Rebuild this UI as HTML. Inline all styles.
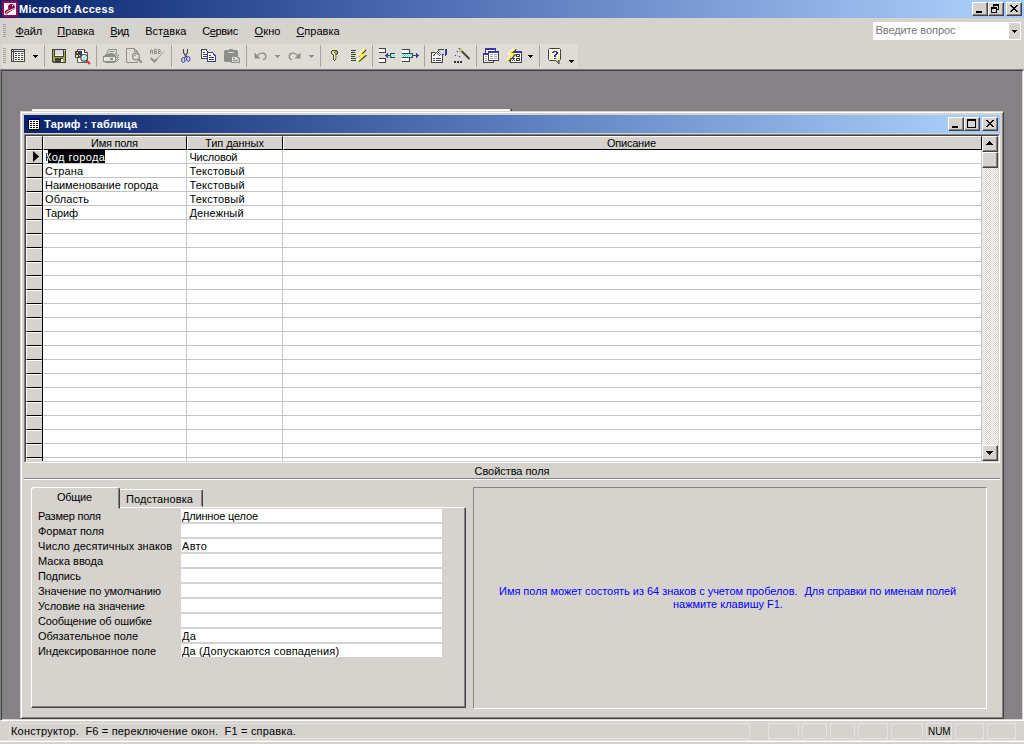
<!DOCTYPE html><html><head><meta charset="utf-8"><title>Microsoft Access</title>
<style>
*{box-sizing:border-box;margin:0;padding:0}
html,body{width:1024px;height:744px;overflow:hidden;background:#d6d3ce}
body{font-family:"Liberation Sans",sans-serif;font-size:11px;color:#000;position:relative}
.a{position:absolute}
.t{position:absolute;white-space:nowrap;line-height:13px;height:13px;transform-origin:0 50%}
u{text-decoration:underline;text-underline-offset:1px;text-decoration-thickness:1px}
svg{position:absolute;overflow:visible}
.btn{position:absolute;background:#d6d3ce;border:1px solid;border-color:#fff #424142 #424142 #fff;box-shadow:inset -1px -1px 0 #848284,inset 1px 1px 0 #d6d3ce}
.sep{position:absolute;width:1px;top:45px;height:22px;background:#a6a39c}
.sel{position:absolute;left:26px;width:16px;height:14px;background:#d6d3ce;border-top:1px solid #fff;border-left:1px solid #fff;border-bottom:1px solid #000}
.hl{position:absolute;height:1px;left:43px;width:938px;background:#c6c3c6}
.pv{position:absolute;left:181px;width:261px;height:13px;background:#fff}
.sp{position:absolute;top:723px;height:16px;border:1px solid #e6e2e0}
</style></head><body>
<div class="a" style="left:0;top:0;width:1024px;height:18px;background:linear-gradient(90deg,#08246b 0,#5678ba 47.3%,#a5cbf7 94.6%)"></div>
<div class="t" style="left: 19px; top: 3px; color: rgb(255, 255, 255); font-weight: bold; letter-spacing: 0.29px;">Microsoft Access</div>
<div class="btn" style="left:972px;top:2px;width:16px;height:14px"></div>
<div class="btn" style="left:988px;top:2px;width:16px;height:14px"></div>
<div class="btn" style="left:1006px;top:2px;width:16px;height:14px"></div>
<div class="a" style="left:976px;top:11px;width:6px;height:2px;background:#000"></div>
<svg style="left:988px;top:2px" width="16" height="14" shape-rendering="crispEdges"><path d="M5 2h6v2h-6zM5 4h1v2h-1zM10 4h1v4h-1zM9 7h1v1h-1zM3 5h6v2h-6zM3 7h1v4h-1zM8 7h1v4h-1zM3 10h6v1h-6z" fill="#000"></path></svg>
<svg style="left:1010px;top:5px" width="8" height="7" shape-rendering="crispEdges"><path d="M0 0h2v1h-2zM6 0h2v1h-2zM1 1h2v1h-2zM5 1h2v1h-2zM2 2h4v1h-4zM3 3h2v1h-2zM2 4h4v1h-4zM1 5h2v1h-2zM5 5h2v1h-2zM0 6h2v1h-2zM6 6h2v1h-2z"></path></svg>
<div class="t" style="left: 15.4px; top: 25px; letter-spacing: -0.09px;"><u>Ф</u>айл</div>
<div class="t" style="left: 57.3px; top: 25px; letter-spacing: -0.03px;"><u>П</u>равка</div>
<div class="t" style="left: 110.3px; top: 25px; letter-spacing: -0.46px;"><u>В</u>ид</div>
<div class="t" style="left: 145.2px; top: 25px; letter-spacing: 0.05px;">Вст<u>а</u>вка</div>
<div class="t" style="left: 202.2px; top: 25px; letter-spacing: -0.34px;">С<u>е</u>рвис</div>
<div class="t" style="left: 254.5px; top: 25px; letter-spacing: 0.14px;"><u>О</u>кно</div>
<div class="t" style="left:296.4px;top:25px"><u>С</u>правка</div>
<div class="a" style="left:3px;top:24px;width:3px;height:1px;background:#a0a0a0"></div>
<div class="a" style="left:3px;top:26px;width:3px;height:1px;background:#a0a0a0"></div>
<div class="a" style="left:3px;top:28px;width:3px;height:1px;background:#a0a0a0"></div>
<div class="a" style="left:3px;top:30px;width:3px;height:1px;background:#a0a0a0"></div>
<div class="a" style="left:3px;top:32px;width:3px;height:1px;background:#a0a0a0"></div>
<div class="a" style="left:3px;top:34px;width:3px;height:1px;background:#a0a0a0"></div>
<div class="a" style="left:3px;top:36px;width:3px;height:1px;background:#a0a0a0"></div>
<div class="a" style="left:873px;top:22px;width:148px;height:18px;background:#fff"></div>
<div class="a" style="left:1009px;top:23px;width:11px;height:16px;background:#d6d3ce"></div>
<svg style="left:1012px;top:30px" width="5" height="3" shape-rendering="crispEdges"><path d="M0 0h5v1h-5zM1 1h3v1h-3zM2 2h1v1h-1z"></path></svg>
<div class="t" style="left: 875.5px; top: 24px; color: rgb(119, 119, 119); letter-spacing: -0.09px;">Введите вопрос</div>
<div class="a" style="left:1px;top:44px;width:577px;height:24px;background:#dfdcd5;border-radius:3px 2px 2px 3px"></div>
<div class="a" style="left:3px;top:48px;width:3px;height:1px;background:#a0a0a0"></div>
<div class="a" style="left:3px;top:50px;width:3px;height:1px;background:#a0a0a0"></div>
<div class="a" style="left:3px;top:52px;width:3px;height:1px;background:#a0a0a0"></div>
<div class="a" style="left:3px;top:54px;width:3px;height:1px;background:#a0a0a0"></div>
<div class="a" style="left:3px;top:56px;width:3px;height:1px;background:#a0a0a0"></div>
<div class="a" style="left:3px;top:58px;width:3px;height:1px;background:#a0a0a0"></div>
<div class="a" style="left:3px;top:60px;width:3px;height:1px;background:#a0a0a0"></div>
<div class="a" style="left:3px;top:62px;width:3px;height:1px;background:#a0a0a0"></div>
<div class="sep" style="left:44px"></div>
<div class="sep" style="left:96px"></div>
<div class="sep" style="left:171px"></div>
<div class="sep" style="left:246px"></div>
<div class="sep" style="left:320px"></div>
<div class="sep" style="left:372px"></div>
<div class="sep" style="left:424px"></div>
<div class="sep" style="left:476px"></div>
<div class="sep" style="left:539px"></div>
<svg style="left:2px;top:1px" width="16" height="16" viewBox="0 0 16 16" shape-rendering="crispEdges"><defs><pattern id="ck" width="2" height="2" patternUnits="userSpaceOnUse"><rect width="2" height="2" fill="#a00000"></rect><rect width="1" height="1" fill="#a000a0"></rect><rect x="1" y="1" width="1" height="1" fill="#a000a0"></rect></pattern></defs><rect width="16" height="16" fill="url(#ck)"></rect><rect x="2" y="2" width="12" height="12" fill="#fff"></rect><g shape-rendering="auto"><ellipse cx="9.5" cy="6.1" rx="3.4" ry="3.2" fill="#8a0040"></ellipse><path d="M4.4 11.2L9 8.2" stroke="#8a0040" stroke-width="3.3" stroke-linecap="round" fill="none"></path><path d="M4.3 11.4L7 9.8L11.6 7.7" stroke="#fff" stroke-width="0.9" stroke-linecap="round" fill="none"></path><rect x="10" y="4" width="1.2" height="1.2" fill="#fff"></rect></g></svg>
<svg style="left:11px;top:49px" width="14" height="13" viewBox="0 0 14 13" shape-rendering="crispEdges"><path fill="#484846" d="M0 0h14v13h-14z"></path><path fill="#fff" d="M1 3h12v9h-12z"></path><path fill="#d6d6d6" d="M3 1h10v1h-10zM1 3h1v9h-1z"></path><path fill="#fff" d="M1 1h1v1h-1z"></path><path fill="#484846" d="M2 1h1v11h-1zM1 2h12v1h-12z"></path><path fill="#3c3c3c" d="M4 4h2v1h-2zM7 4h2v1h-2zM10 4h2v1h-2zM4 6h2v1h-2zM7 6h2v1h-2zM10 6h2v1h-2zM4 8h2v1h-2zM7 8h2v1h-2zM10 8h2v1h-2zM4 10h2v1h-2zM7 10h2v1h-2zM10 10h2v1h-2z"></path></svg>
<svg style="left:33px;top:55px" width="5" height="3" viewBox="0 0 5 3" shape-rendering="crispEdges"><path fill="#000" d="M0 0h5v1h-5zM1 1h3v1h-3zM2 2h1v1h-1z"></path></svg>
<svg style="left:52px;top:49px" width="14" height="14" viewBox="0 0 14 14" shape-rendering="crispEdges"><path fill="#404040" d="M0 0h14v13h-14zM1 13h13v1h-13z"></path><path fill="#a6a63c" d="M1 1h12v11h-12zM2 12h11v1h-11z"></path><path fill="#404040" d="M2 1h10v7h-10zM3 9h8v4h-8z"></path><path fill="#dcdce0" d="M3 1h8v6h-8z"></path><path fill="#fff" d="M3 6h8v1h-8zM12 1h1v1h-1zM9 10h2v3h-2z"></path></svg>
<svg style="left:75px;top:49px" width="16" height="16" viewBox="0 0 16 16" shape-rendering="crispEdges"><g shape-rendering="auto"><path d="M2.5 0.5h7l3 3v10h-10z" fill="#fff" stroke="#5a5a58" stroke-width="1"></path><path d="M9.5 0.5v3h3" fill="#fff" stroke="#404040" stroke-width="1"></path></g><path fill="#404040" d="M0 2h7v7h-7z"></path><path fill="#e02020" d="M1 3h2v2h-2z"></path><path fill="#2030d0" d="M4 3h2v2h-2z"></path><path fill="#e8e820" d="M1 6h2v2h-2z"></path><path fill="#208020" d="M4 6h2v2h-2z"></path><path fill="#fff" d="M2 3h1v1h-1zM1 7h1v1h-1z"></path><path fill="#c0e0c0" d="M4 6h1v1h-1z"></path><g shape-rendering="auto"><path d="M11.5 11.5L14.4 14.4" stroke="#e83838" stroke-width="2.2" stroke-linecap="round"></path><circle cx="9.2" cy="8.8" r="3.3" fill="#fff" stroke="#484848" stroke-width="1.2"></circle><path d="M7.6 10.6l3.2-3.2M8.8 11l2.4-2.4M7.2 9.4l2-2" stroke="#40e8e8" stroke-width="0.9"></path></g></svg>
<svg style="left:103px;top:49px" width="16" height="14" viewBox="0 0 16 14" shape-rendering="crispEdges"><g shape-rendering="auto" fill="none" stroke="#8c8e8a" stroke-width="1"><path d="M5.5 0.5H13.5V2.5L12.5 5"></path><path d="M5.5 0.5L3.5 5.5"></path><path d="M6.5 2.5H11M5.5 4.5H10"></path><path d="M2.5 5.5H12.5M1.5 6.5H12.5"></path><rect x="0.5" y="7.5" width="12" height="5"></rect><path d="M2 13.5H12"></path></g><path fill="#eceae4" d="M1 9h6v2h-6zM10 9h2v2h-2z"></path><path fill="#8c8e8a" d="M7 9h3v2h-3z"></path><path fill="#8c8e8a" d="M13 4h1v1h-1zM14 5h1v1h-1zM15 6h1v1h-1zM13 6h1v1h-1zM14 7h1v1h-1zM15 8h1v1h-1zM13 8h1v1h-1zM14 9h1v1h-1zM15 10h1v1h-1zM13 10h1v1h-1zM14 11h1v1h-1zM13 12h1v1h-1z"></path></svg>
<svg style="left:126px;top:48px" width="16" height="15" viewBox="0 0 16 15" shape-rendering="crispEdges"><g shape-rendering="auto" fill="none" stroke="#8c8e8a"><path d="M0.5 0.5h8l3 3v3M0.5 0.5v14h11v-1.5"></path><path d="M8.5 0.5v3h3"></path><circle cx="10" cy="8.5" r="3.4" stroke-width="1.2"></circle><path d="M12.6 11.2L15.2 14" stroke-width="2" stroke-linecap="round"></path><path d="M8.3 8.3a2 2 0 0 1 1.6-1.6"></path></g></svg>
<svg style="left:150px;top:49px" width="15" height="14" viewBox="0 0 15 14" shape-rendering="crispEdges"><path fill="#8c8e8a" d="M0 1h1v4h-1zM1 0h1v1h-1zM2 1h1v4h-1zM1 2h1v1h-1zM4 0h3v1h-3zM4 1h1v4h-1zM5 2h2v1h-2zM6 3h1v1h-1zM5 4h2v1h-2zM8 0h2v1h-2zM8 1h1v4h-1zM10 1h1v1h-1zM9 2h1v1h-1zM10 3h1v1h-1zM9 4h1v1h-1z"></path><g shape-rendering="auto"><path d="M0.8 9l3.6 3.6L7 10" stroke="#8c8e8a" stroke-width="2" fill="none"></path><path d="M6 11L14 2.3" stroke="#8c8e8a" stroke-width="0.9" fill="none"></path></g></svg>
<svg style="left:181px;top:49px" width="10" height="14" viewBox="0 0 10 14" shape-rendering="crispEdges"><g shape-rendering="auto" fill="none"><path d="M2.5 0v3.5L4.5 6.8M6.5 0v3.5L4.5 6.8M4.5 5.5v2.5" stroke="#404040" stroke-width="1.1"></path><ellipse cx="2.3" cy="11" rx="1.7" ry="2.4" stroke="#3838a8" stroke-width="1"></ellipse><ellipse cx="7.3" cy="10" rx="1.7" ry="2.4" stroke="#3838a8" stroke-width="1"></ellipse><path d="M4.5 7.5L3.6 9M4.8 7.2L6 8" stroke="#3838a8" stroke-width="1.1"></path></g></svg>
<svg style="left:201px;top:49px" width="15" height="13" viewBox="0 0 15 13" shape-rendering="crispEdges"><path fill="#404040" d="M0 0h6v1h-6zM0 0h1v10h-1zM0 9h7v1h-7zM5 1h1v1h-1zM6 2h1v1h-1zM7 3h1v1h-1z"></path><path fill="#fff" d="M1 1h4v8h-4zM5 2h1v7h-1zM6 3h1v6h-1z"></path><path fill="#404040" d="M2 3h2v1h-2zM2 5h4v1h-4zM2 7h4v1h-4z"></path><path fill="#3838a8" d="M6 3h6v10h-6zM12 4h1v9h-1zM13 5h1v8h-1zM14 6h1v7h-1z"></path><path fill="#fff" d="M7 4h4v8h-4zM11 5h1v7h-1zM12 6h1v6h-1zM13 7h1v5h-1z"></path><path fill="#fff" d="M11 4h1v1h-1z"></path><path fill="#404040" d="M8 6h2v1h-2zM8 8h5v1h-5zM8 10h5v1h-5z"></path></svg>
<svg style="left:224px;top:49px" width="16" height="14" viewBox="0 0 16 14" shape-rendering="crispEdges"><g shape-rendering="auto"><rect x="0" y="1" width="14" height="12" rx="1.5" fill="#8c8e8a"></rect></g><path fill="#8c8e8a" d="M5 0h4v1h-4z"></path><path fill="#dedcd6" d="M4 3h6v1h-6z"></path><path fill="#8c8e8a" d="M7 7h7v7h-7zM14 8h1v6h-1zM15 9h1v5h-1z"></path><path fill="#dedcd6" d="M8 8h5v5h-5zM13 9h1v4h-1zM14 10h1v3h-1z"></path><path fill="#8c8e8a" d="M9 9h2v1h-2zM9 11h5v1h-5z"></path></svg>
<svg style="left:254px;top:52px" width="13" height="8" viewBox="0 0 13 8" shape-rendering="crispEdges"><g shape-rendering="auto"><path d="M0.5 0.5v6h6z" fill="#8c8e8a"></path><path d="M3.5 3.5C6 0.2 11.5 0.5 11.8 4.2C12 6.5 10.5 7.5 9 7.5" stroke="#8c8e8a" stroke-width="1.3" fill="none"></path></g></svg>
<svg style="left:275px;top:55px" width="5" height="3" viewBox="0 0 5 3" shape-rendering="crispEdges"><path fill="#8c8e8a" d="M0 0h5v1h-5zM1 1h3v1h-3zM2 2h1v1h-1z"></path></svg>
<svg style="left:288px;top:52px" width="13" height="8" viewBox="0 0 13 8" shape-rendering="crispEdges"><g shape-rendering="auto"><path d="M12.5 0.5v6h-6z" fill="#8c8e8a"></path><path d="M9.5 3.5C7 0.2 1.5 0.5 1.2 4.2C1 6.5 2.5 7.5 4 7.5" stroke="#8c8e8a" stroke-width="1.3" fill="none"></path></g></svg>
<svg style="left:309px;top:55px" width="5" height="3" viewBox="0 0 5 3" shape-rendering="crispEdges"><path fill="#8c8e8a" d="M0 0h5v1h-5zM1 1h3v1h-3zM2 2h1v1h-1z"></path></svg>
<svg style="left:331px;top:50px" width="8" height="12" viewBox="0 0 8 12" shape-rendering="crispEdges"><path fill="#404040" d="M1 0h5v1h-5zM0 1h1v3h-1zM6 1h1v3h-1zM1 4h1v1h-1zM5 4h1v1h-1zM2 5h1v5h-1zM3 10h1v1h-1zM4 9h1v1h-1z"></path><path fill="#e6e632" d="M1 1h3v2h-3zM1 3h1v1h-1z"></path><path fill="#a0a030" d="M4 1h2v3h-2zM3 3h2v2h-2zM4 5h1v4h-1z"></path><path fill="#fff" d="M2 2h2v2h-2zM3 4h1v5h-1z"></path><path fill="#a0a030" d="M5 6h1v1h-1zM5 8h1v1h-1z"></path><path fill="#404040" d="M3 2h1v1h-1z"></path></svg>
<svg style="left:351px;top:48px" width="16" height="14" viewBox="0 0 16 14" shape-rendering="crispEdges"><path fill="#404040" d="M0 2h5v1h-5zM0 4h4v1h-4zM0 6h5v1h-5zM0 8h4v1h-4zM0 10h5v1h-5zM0 12h5v1h-5z"></path><g shape-rendering="auto"><path d="M15.2 1.6L9.4 7.9H14.6L7.8 13.6" stroke="#404040" stroke-width="1.3" fill="none"></path><path d="M13 0.4L6.4 6.7H11.8L5.8 12.4" stroke="#fff" stroke-width="1.3" fill="none"></path><path d="M14 1L7.8 7.2H13.2L6.8 13" stroke="#ffff10" stroke-width="1.2" fill="none"></path></g></svg>
<svg style="left:379px;top:48px" width="16" height="15" viewBox="0 0 16 15" shape-rendering="crispEdges"><defs><pattern id="cy" width="2" height="2" patternUnits="userSpaceOnUse"><rect width="2" height="2" fill="#fff"></rect><rect width="1" height="1" fill="#20f0f0"></rect><rect x="1" y="1" width="1" height="1" fill="#20f0f0"></rect></pattern></defs><path fill="#404040" d="M0 0h7v1h-7zM6 0h1v5h-1zM0 4h7v1h-7zM0 10h7v1h-7zM6 10h1v5h-1zM0 14h7v1h-7z"></path><path fill="#fff" d="M0 1h6v3h-6zM0 11h6v3h-6z"></path><path fill="#404040" d="M11 5h5v1h-5zM11 5h1v5h-1zM11 9h5v1h-5z"></path><rect x="12" y="6" width="4" height="3" fill="url(#cy)"></rect><path fill="#3838a8" d="M6 7h5v1h-5zM7 6h1v3h-1zM8 5h1v5h-1z"></path></svg>
<svg style="left:402px;top:49px" width="17" height="13" viewBox="0 0 17 13" shape-rendering="crispEdges"><path fill="#404040" d="M0 0h8v1h-8zM7 0h1v4h-1zM0 12h8v1h-8zM7 8h1v5h-1z"></path><path fill="#fff" d="M0 1h7v3h-7zM0 9h7v3h-7z"></path><path fill="#404040" d="M0 4h11v1h-11zM10 4h1v5h-1zM0 8h11v1h-11z"></path><rect x="0" y="5" width="10" height="3" fill="url(#cy)"></rect><path fill="#3838a8" d="M11 6h6v1h-6zM15 5h1v3h-1zM14 4h1v5h-1z"></path></svg>
<svg style="left:431px;top:49px" width="16" height="14" viewBox="0 0 16 14" shape-rendering="crispEdges"><path fill="#404040" d="M0 3h12v11h-12z"></path><path fill="#fff" d="M1 4h10v9h-10z"></path><path fill="#404040" d="M2 9h2v1h-2zM5 9h5v1h-5zM2 11h2v1h-2zM5 11h5v1h-5z"></path><path fill="#dcdce0" d="M7 1h7v4h-7z"></path><path fill="#404040" d="M7 0h6v1h-6zM8 5h5v1h-5z"></path><path fill="#3838a8" d="M14 0h2v6h-2zM14 6h1v1h-1z"></path><defs><pattern id="hd" width="2" height="2" patternUnits="userSpaceOnUse"><rect width="2" height="2" fill="#fff"></rect><rect width="1" height="1" fill="#505050"></rect><rect x="1" y="1" width="1" height="1" fill="#505050"></rect></pattern></defs><g shape-rendering="auto"><path d="M7 0.5L2.5 5.5L3.5 6.5L5.5 5L8.5 8L11 5.5z" fill="url(#hd)"></path><path d="M2.2 5.8l1.2 1.2" stroke="#404040" stroke-width="1.2"></path></g></svg>
<svg style="left:454px;top:48px" width="16" height="15" viewBox="0 0 16 15" shape-rendering="crispEdges"><g shape-rendering="auto"><path d="M5.5 1L15 10.5" stroke="#404040" stroke-width="1.8" stroke-linecap="round"></path><path d="M6 1.5L7.2 2.7" stroke="#f0f020" stroke-width="1.6" stroke-linecap="round"></path><circle cx="3.5" cy="3.5" r="1.5" fill="#eeeadc"></circle><circle cx="3.5" cy="3.5" r="0.85" fill="#3040f0"></circle><circle cx="1.5" cy="7.5" r="1.5" fill="#eeeadc"></circle><circle cx="1.5" cy="7.5" r="0.85" fill="#3040f0"></circle><circle cx="5.5" cy="8.5" r="1.5" fill="#eeeadc"></circle><circle cx="5.5" cy="8.5" r="0.85" fill="#3040f0"></circle></g><path fill="#303030" d="M0 13h2v2h-2zM3 13h2v2h-2zM6 13h2v2h-2z"></path></svg>
<svg style="left:483px;top:48px" width="16" height="15" viewBox="0 0 16 15" shape-rendering="crispEdges"><path fill="#404040" d="M2 0h11v9h-11z"></path><path fill="#fff" d="M3 2h9v6h-9z"></path><path fill="#3838a8" d="M2 0h11v2h-11z"></path><path fill="#404040" d="M0 5h11v10h-11z"></path><path fill="#fff" d="M1 7h9v7h-9z"></path><path fill="#3838a8" d="M0 5h11v2h-11z"></path><path fill="#a8a8a8" d="M2 8h2v1h-2zM2 10h2v1h-2zM2 12h2v1h-2z"></path><path fill="#404040" d="M5 3h11v10h-11z"></path><path fill="#fff" d="M6 5h9v7h-9z"></path><path fill="#3838a8" d="M5 3h11v2h-11z"></path><path fill="#a8a8a8" d="M7 6h3v1h-3zM11 6h3v1h-3zM7 8h3v1h-3zM11 8h3v1h-3zM7 10h3v1h-3zM11 10h3v1h-3z"></path></svg>
<svg style="left:506px;top:48px" width="16" height="15" viewBox="0 0 16 15" shape-rendering="crispEdges"><path fill="#404040" d="M4 3h12v12h-12z"></path><path fill="#fff" d="M5 5h10v9h-10z"></path><path fill="#3838a8" d="M4 3h12v2h-12z"></path><path fill="#404040" d="M10 6h4v1h-4zM10 6h1v3h-1zM13 6h1v3h-1zM10 8h4v1h-4zM10 10h4v1h-4zM10 10h1v3h-1zM13 10h1v3h-1zM10 12h4v1h-4zM6 10h3v1h-3zM6 12h1v1h-1zM8 12h1v1h-1zM7 11h1v1h-1z"></path><g shape-rendering="auto"><path d="M10.2 1.4L5.4 6.9H9.2L2.8 13.2" stroke="#404040" stroke-width="1.3" fill="none"></path><path d="M8 0.2L2.4 5.6H6.4L0.8 11.6" stroke="#fff" stroke-width="1.3" fill="none"></path><path d="M9 0.8L3.8 6.2H7.8L1.8 12.4" stroke="#ffff10" stroke-width="1.2" fill="none"></path></g></svg>
<svg style="left:528px;top:55px" width="5" height="3" viewBox="0 0 5 3" shape-rendering="crispEdges"><path fill="#000" d="M0 0h5v1h-5zM1 1h3v1h-3zM2 2h1v1h-1z"></path></svg>
<svg style="left:548px;top:48px" width="14" height="16" viewBox="0 0 14 16" shape-rendering="crispEdges"><defs><pattern id="yd" width="2" height="2" patternUnits="userSpaceOnUse"><rect width="2" height="2" fill="#fff"></rect><rect width="1" height="1" fill="#f4f040"></rect></pattern></defs><g shape-rendering="auto"><path d="M1.5 0.5h10l1 1v10l-1 1h-0.8l0.3 3l-3.2-3h-6.3l-1-1v-10z" fill="url(#yd)" stroke="#404040" stroke-width="1"></path><path d="M10.7 12.5l0.3 3l-3.2-3" fill="#f4f040" stroke="#404040" stroke-width="1"></path></g><path fill="#3030b0" d="M5 3h4v1h-4zM4 4h2v1h-2zM8 4h2v1h-2zM8 5h2v1h-2zM7 6h2v1h-2zM6 7h2v1h-2zM6 8h2v1h-2zM6 10h2v1h-2z"></path></svg>
<svg style="left:569px;top:60px" width="5" height="3" viewBox="0 0 5 3" shape-rendering="crispEdges"><path fill="#000" d="M0 0h5v1h-5zM1 1h3v1h-3zM2 2h1v1h-1z"></path></svg>
<div class="a" style="left:0;top:69px;width:1024px;height:651px;background:#848284;border-left:1px solid #848284;border-top:1px solid #848284"></div>
<div class="a" style="left:1px;top:70px;width:1023px;height:650px;border-left:1px solid #424142;border-top:1px solid #424142"></div>
<div class="a" style="left:2px;top:719px;width:1021px;height:1px;background:#d6d3ce"></div>
<div class="a" style="left:1022px;top:71px;width:1px;height:649px;background:#d6d3ce"></div>
<div class="a" style="left:1023px;top:70px;width:1px;height:651px;background:#fff"></div>
<div class="a" style="left:1px;top:720px;width:1023px;height:1px;background:#fff"></div>
<div class="a" style="left:32px;top:109px;width:478px;height:2px;background:#fff;border-top:1px solid #f0eee8"></div>
<div class="a" style="left:510px;top:109px;width:2px;height:2px;background:#424142;border-left:1px solid #848284"></div>
<div class="a" style="left:20px;top:111px;width:984px;height:608px;background:#d6d3ce;border:1px solid;border-color:#d6d3ce #424142 #424142 #d6d3ce;box-shadow:inset 1px 1px 0 #fff,inset -1px -1px 0 #848284"></div>
<div class="a" style="left:24px;top:115px;width:976px;height:18px;background:linear-gradient(90deg,#08246b 0,#5678ba 47.3%,#a5cbf7 94.6%)"></div>
<div class="t" style="left: 44px; top: 118px; color: rgb(255, 255, 255); font-weight: bold; letter-spacing: 0.2px;">Тариф : таблица</div>
<div class="btn" style="left:948px;top:117px;width:16px;height:14px"></div>
<div class="btn" style="left:964px;top:117px;width:16px;height:14px"></div>
<div class="btn" style="left:982px;top:117px;width:16px;height:14px"></div>
<div class="a" style="left:952px;top:126px;width:6px;height:2px;background:#000"></div>
<svg style="left:964px;top:117px" width="16" height="14" shape-rendering="crispEdges"><path d="M3 2h9v2h-9zM3 4h1v7h-1zM11 4h1v7h-1zM3 10h9v1h-9z" fill="#000"></path></svg>
<svg style="left:986px;top:120px" width="8" height="7" shape-rendering="crispEdges"><path d="M0 0h2v1h-2zM6 0h2v1h-2zM1 1h2v1h-2zM5 1h2v1h-2zM2 2h4v1h-4zM3 3h2v1h-2zM2 4h4v1h-4zM1 5h2v1h-2zM5 5h2v1h-2zM0 6h2v1h-2zM6 6h2v1h-2z"></path></svg>
<svg style="left:28px;top:118px" width="12" height="12" shape-rendering="crispEdges"><rect x="0" y="0" width="12" height="2" fill="#000090"></rect><rect x="0" y="2" width="12" height="10" fill="#000"></rect><rect x="1" y="2" width="10" height="9" fill="#fff"></rect><path d="M2 3h2v1h-2zM5 3h2v1h-2zM8 3h2v1h-2zM2 5h2v1h-2zM5 5h2v1h-2zM8 5h2v1h-2zM2 7h2v1h-2zM5 7h2v1h-2zM8 7h2v1h-2zM2 9h2v1h-2zM5 9h2v1h-2zM8 9h2v1h-2z" fill="#000"></path></svg>
<div class="a" style="left:24px;top:134px;width:976px;height:329px;background:#fff;border:1px solid;border-color:#848284 #fff #fff #848284"></div>
<div class="a" style="left:25px;top:135px;width:974px;height:327px;border:1px solid;border-color:#424142 #d6d3ce #d6d3ce #424142"></div>
<div class="a" style="left:26px;top:136px;width:17px;height:14px;background:#d6d3ce;border-top:1px solid #fff;border-left:1px solid #fff;border-right:1px solid #000;border-bottom:1px solid #000"></div>
<div class="a" style="left:43px;top:136px;width:144px;height:14px;background:#d6d3ce;border-top:1px solid #fff;border-left:1px solid #fff;border-right:1px solid #000;border-bottom:1px solid #000"></div>
<div class="a" style="left:187px;top:136px;width:96px;height:14px;background:#d6d3ce;border-top:1px solid #fff;border-left:1px solid #fff;border-right:1px solid #000;border-bottom:1px solid #000"></div>
<div class="a" style="left:283px;top:136px;width:699px;height:14px;background:#d6d3ce;border-top:1px solid #fff;border-left:1px solid #fff;border-right:1px solid #000;border-bottom:1px solid #000"></div>
<div class="t" style="left: 91px; top: 137px; letter-spacing: -0.24px;">Имя поля</div>
<div class="t" style="left: 205px; top: 137px; letter-spacing: -0.06px;">Тип данных</div>
<div class="t" style="left: 607px; top: 137px; letter-spacing: -0.23px;">Описание</div>
<div class="sel" style="top:150px;height:14px"></div>
<div class="hl" style="top:163px"></div>
<div class="sel" style="top:164px;height:14px"></div>
<div class="hl" style="top:177px"></div>
<div class="sel" style="top:178px;height:14px"></div>
<div class="hl" style="top:191px"></div>
<div class="sel" style="top:192px;height:14px"></div>
<div class="hl" style="top:205px"></div>
<div class="sel" style="top:206px;height:14px"></div>
<div class="hl" style="top:219px"></div>
<div class="sel" style="top:220px;height:14px"></div>
<div class="hl" style="top:233px"></div>
<div class="sel" style="top:234px;height:14px"></div>
<div class="hl" style="top:247px"></div>
<div class="sel" style="top:248px;height:14px"></div>
<div class="hl" style="top:261px"></div>
<div class="sel" style="top:262px;height:14px"></div>
<div class="hl" style="top:275px"></div>
<div class="sel" style="top:276px;height:14px"></div>
<div class="hl" style="top:289px"></div>
<div class="sel" style="top:290px;height:14px"></div>
<div class="hl" style="top:303px"></div>
<div class="sel" style="top:304px;height:14px"></div>
<div class="hl" style="top:317px"></div>
<div class="sel" style="top:318px;height:14px"></div>
<div class="hl" style="top:331px"></div>
<div class="sel" style="top:332px;height:14px"></div>
<div class="hl" style="top:345px"></div>
<div class="sel" style="top:346px;height:14px"></div>
<div class="hl" style="top:359px"></div>
<div class="sel" style="top:360px;height:14px"></div>
<div class="hl" style="top:373px"></div>
<div class="sel" style="top:374px;height:14px"></div>
<div class="hl" style="top:387px"></div>
<div class="sel" style="top:388px;height:14px"></div>
<div class="hl" style="top:401px"></div>
<div class="sel" style="top:402px;height:14px"></div>
<div class="hl" style="top:415px"></div>
<div class="sel" style="top:416px;height:14px"></div>
<div class="hl" style="top:429px"></div>
<div class="sel" style="top:430px;height:14px"></div>
<div class="hl" style="top:443px"></div>
<div class="sel" style="top:444px;height:14px"></div>
<div class="hl" style="top:457px"></div>
<div class="sel" style="top:458px;height:3px;border-bottom:0"></div>
<div class="a" style="left:42px;top:150px;width:1px;height:311px;background:#000"></div>
<div class="a" style="left:186px;top:150px;width:1px;height:311px;background:#c6c3c6"></div>
<div class="a" style="left:282px;top:150px;width:1px;height:311px;background:#c6c3c6"></div>
<div class="a" style="left:981px;top:150px;width:1px;height:311px;background:#c6c3c6"></div>
<svg style="left:33px;top:151px" width="6" height="11"><path d="M0 0L6 5.5L0 11z" fill="#000"></path></svg>
<div class="a" style="left:48px;top:150px;width:57px;height:13px;background:#000"></div>
<div class="t" style="left: 45px; top: 151px; color: rgb(255, 255, 255); letter-spacing: 0.42px;">Код города</div>
<div class="a" style="left:46px;top:150px;width:2px;height:13px;overflow:hidden;background:#fff"><div class="t" style="left: -1px; top: 1px; color: rgb(0, 0, 0); letter-spacing: 0.42px;">Код города</div></div>
<div class="t" style="left: 189.5px; top: 151px; letter-spacing: -0.23px;">Числовой</div>
<div class="t" style="left: 45px; top: 165px; letter-spacing: 0.12px;">Страна</div>
<div class="t" style="left: 189.5px; top: 165px; letter-spacing: 0.18px;">Текстовый</div>
<div class="t" style="left: 45px; top: 179px; letter-spacing: -0.04px;">Наименование города</div>
<div class="t" style="left: 189.5px; top: 179px; letter-spacing: 0.18px;">Текстовый</div>
<div class="t" style="left: 45px; top: 193px; letter-spacing: 0.14px;">Область</div>
<div class="t" style="left: 189.5px; top: 193px; letter-spacing: 0.18px;">Текстовый</div>
<div class="t" style="left: 45px; top: 207px; letter-spacing: -0.16px;">Тариф</div>
<div class="t" style="left: 189.5px; top: 207px; letter-spacing: 0.13px;">Денежный</div>
<div class="a" style="left:982px;top:136px;width:16px;height:325px;background:repeating-conic-gradient(#fff 0 25%,#d6d3ce 0 50%) 0 0/2px 2px"></div>
<div class="btn" style="left:982px;top:136px;width:16px;height:16px"></div>
<div class="btn" style="left:982px;top:152px;width:16px;height:16px"></div>
<div class="btn" style="left:982px;top:445px;width:16px;height:16px"></div>
<svg style="left:986px;top:141px" width="7" height="4" shape-rendering="crispEdges"><path d="M3 0h1v1h-1zM2 1h3v1h-3zM1 2h5v1h-5zM0 3h7v1h-7z"></path></svg>
<svg style="left:986px;top:451px" width="7" height="4" shape-rendering="crispEdges"><path d="M0 0h7v1h-7zM1 1h5v1h-5zM2 2h3v1h-3zM3 3h1v1h-1z"></path></svg>
<div class="t" style="left: 474.5px; top: 465px; letter-spacing: -0.05px;">Свойства поля</div>
<div class="a" style="left:24px;top:478px;width:976px;height:2px;border-top:1px solid #848284;border-bottom:1px solid #fff"></div>
<div class="a" style="left:31px;top:507px;width:435px;height:201px;border:1px solid;border-color:#fff #424142 #424142 #fff;box-shadow:inset -1px -1px 0 #848284"></div>
<div class="a" style="left:119px;top:489px;width:84px;height:18px;border:1px solid;border-color:#fff #424142 transparent #fff;border-radius:2px 2px 0 0;box-shadow:inset -1px 0 0 #848284"></div>
<div class="a" style="left:31px;top:487px;width:89px;height:22px;background:#d6d3ce;border:1px solid;border-color:#fff #424142 transparent #fff;border-radius:3px 3px 0 0;box-shadow:inset -1px 0 0 #848284"></div>
<div class="a" style="left:32px;top:507px;width:86px;height:2px;background:#d6d3ce"></div>
<div class="t" style="left: 57px; top: 491px; letter-spacing: -0.29px;">Общие</div>
<div class="t" style="left: 126px; top: 493px; letter-spacing: 0.1px;">Подстановка</div>
<div class="pv" style="top:509px"></div>
<div class="t" style="left: 38px; top: 510px; letter-spacing: -0.21px;">Размер поля</div>
<div class="t" style="left: 182px; top: 510px; letter-spacing: -0.18px;">Длинное целое</div>
<div class="pv" style="top:524px"></div>
<div class="t" style="left: 38px; top: 525px; letter-spacing: -0.03px;">Формат поля</div>
<div class="pv" style="top:539px"></div>
<div class="t" style="left: 38px; top: 540px; letter-spacing: 0.08px;">Число десятичных знаков</div>
<div class="t" style="left: 182px; top: 540px; letter-spacing: 0.34px;">Авто</div>
<div class="pv" style="top:554px"></div>
<div class="t" style="left: 38px; top: 555px; letter-spacing: -0.01px;">Маска ввода</div>
<div class="pv" style="top:569px"></div>
<div class="t" style="left: 38px; top: 570px; letter-spacing: -0.09px;">Подпись</div>
<div class="pv" style="top:584px"></div>
<div class="t" style="left: 38px; top: 585px; letter-spacing: -0.06px;">Значение по умолчанию</div>
<div class="pv" style="top:599px"></div>
<div class="t" style="left: 38px; top: 600px; letter-spacing: -0.06px;">Условие на значение</div>
<div class="pv" style="top:614px"></div>
<div class="t" style="left: 38px; top: 615px; letter-spacing: -0.16px;">Сообщение об ошибке</div>
<div class="pv" style="top:629px"></div>
<div class="t" style="left:38px;top:630px">Обязательное поле</div>
<div class="t" style="left: 182px; top: 630px; letter-spacing: 0.42px;">Да</div>
<div class="pv" style="top:644px"></div>
<div class="t" style="left: 38px; top: 645px; letter-spacing: -0.05px;">Индексированное поле</div>
<div class="t" style="left: 182px; top: 645px; letter-spacing: 0.14px;">Да (Допускаются совпадения)</div>
<div class="a" style="left:473px;top:487px;width:514px;height:222px;border:1px solid;border-color:#848284 #fff #fff #848284"></div>
<div class="t" style="left: 499px; top: 585px; color: rgb(0, 0, 255); letter-spacing: -0.03px;">Имя поля может состоять из 64 знаков с учетом пробелов.</div>
<div class="t" style="left: 804.5px; top: 585px; color: rgb(0, 0, 255); letter-spacing: -0.12px;">Для справки по именам полей</div>
<div class="t" style="left: 673px; top: 598px; color: rgb(0, 0, 255); letter-spacing: -0.01px;">нажмите клавишу F1.</div>
<div class="a" style="left:0;top:741px;width:1024px;height:1px;background:#fff"></div>
<div class="a" style="left:0;top:740px;width:1024px;height:1px;background:#e6e3de"></div>
<div class="sp" style="left:9px;width:741px"></div>
<div class="sp" style="left:768px;width:31px"></div>
<div class="sp" style="left:802px;width:25px"></div>
<div class="sp" style="left:830px;width:25px"></div>
<div class="sp" style="left:858px;width:30px"></div>
<div class="sp" style="left:891px;width:32px"></div>
<div class="sp" style="left:926px;width:26px"></div>
<div class="sp" style="left:955px;width:29px"></div>
<div class="sp" style="left:987px;width:29px"></div>
<div class="t" style="left: 11px; top: 725px; letter-spacing: 0.18px;">Конструктор.&nbsp; F6 = переключение окон.&nbsp; F1 = справка.</div>
<div class="t" style="left:927.5px;top:725px;transform:scaleX(.9)">NUM</div>

</body></html>
